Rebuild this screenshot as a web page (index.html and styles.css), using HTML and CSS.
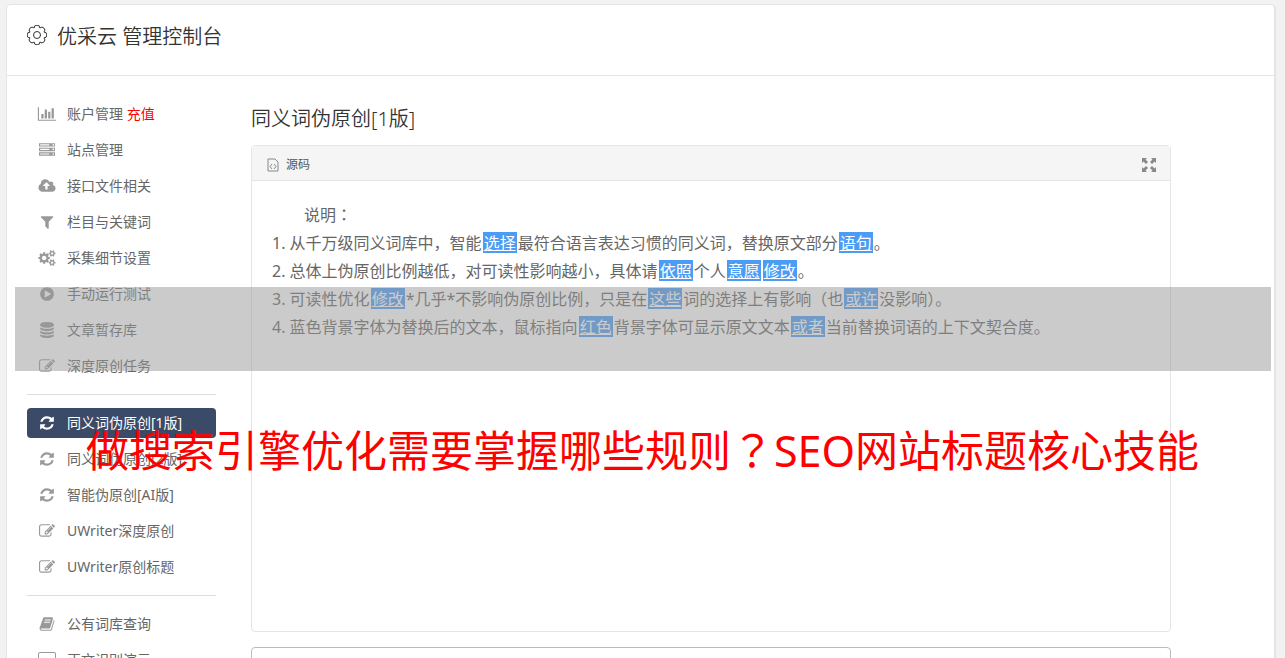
FILE: index.html
```html
<!DOCTYPE html>
<html lang="zh-CN">
<head>
  <meta charset="UTF-8" />
  <title>优采云 管理控制台</title>
  <link rel="stylesheet" href="styles.css">
</head>
<body>
  <!-- Icons -->
  <svg class="sprite" aria-hidden="true">
    <symbol id="i-chart" viewBox="0 0 2048 1792"><path d="M640 896v512h-256v-512h256zm384-512v1024h-256v-1024h256zm1024 1152v128h-2048v-1536h128v1408h1920zm-640-896v768h-256v-768h256zm384-384v1152h-256v-1152h256z"/></symbol>
    <symbol id="i-server" viewBox="0 0 1792 1792"><path d="M128 1408h1024v-128h-1024v128zm0-512h1024v-128h-1024v128zm1568 448q0-40-28-68t-68-28-68 28-28 68 28 68 68 28 68-28 28-68zm-1568-960h1024v-128h-1024v128zm1568 448q0-40-28-68t-68-28-68 28-28 68 28 68 68 28 68-28 28-68zm0-512q0-40-28-68t-68-28-68 28-28 68 28 68 68 28 68-28 28-68zm96 832v384h-1792v-384h1792zm0-512v384h-1792v-384h1792zm0-512v384h-1792v-384h1792z"/></symbol>
    <symbol id="i-cloud" viewBox="0 0 1920 1792"><path d="M1280 864q0-14-9-23l-352-352q-9-9-23-9t-23 9l-351 351q-10 12-10 24 0 14 9 23t23 9h224v352q0 13 9.500 22.500t22.500 9.500h192q13 0 22.500-9.500t9.500-22.500v-352h224q13 0 22.500-9.500t9.500-22.500zm640 288q0 159-112.500 271.500t-271.500 112.500h-1088q-185 0-316.500-131.500t-131.500-316.500q0-130 70-240t188-165q-2-30-2-43 0-212 150-362t362-150q156 0 285.500 87t188.500 231q71-62 166-62 106 0 181 75t75 181q0 76-41 138 130 31 213.500 135.500t83.500 238.500z"/></symbol>
    <symbol id="i-filter" viewBox="0 0 1792 1792"><path d="M1595 295q17 41-14 70l-493 493v742q0 42-39 59-13 5-25 5-27 0-45-19l-256-256q-19-19-19-45v-486l-493-493q-31-29-14-70 17-39 59-39h1280q42 0 59 39z"/></symbol>
    <symbol id="i-cogs" viewBox="0 0 1920 1792"><path d="M896 896q0-106-75-181t-181-75-181 75-75 181 75 181 181 75 181-75 75-181zm768 512q0-52-38-90t-90-38-90 38-38 90q0 53 37.500 90.500t90.500 37.500 90.500-37.500 37.500-90.500zm0-1024q0-52-38-90t-90-38-90 38-38 90q0 53 37.500 90.500t90.500 37.500 90.500-37.500 37.500-90.500zm-384 421v185q0 10-7 19.500t-16 10.500l-155 24q-11 35-32 76 34 48 90 115 7 11 7 20 0 12-7 19-23 30-82.500 89.500t-78.500 59.500q-11 0-21-7l-115-90q-37 19-77 31-11 108-23 155-7 24-30 24h-186q-11 0-20-7.500t-10-17.500l-23-153q-34-10-75-31l-118 89q-7 7-20 7-11 0-21-8-144-133-144-160 0-9 7-19 10-14 41-53t47-61q-23-44-35-82l-152-24q-10-1-17-9.500t-7-19.500v-185q0-10 7-19.500t16-10.500l155-24q11-35 32-76-34-48-90-115-7-11-7-20 0-12 7-20 22-30 82-89t79-59q11 0 21 7l115 90q34-18 77-32 11-108 23-154 7-24 30-24h186q11 0 20 7.500t10 17.500l23 153q34 10 75 31l118-89q8-7 20-7 11 0 21 8 144 133 144 160 0 8-7 19-12 16-42 54t-45 60q23 48 34 82l152 23q10 2 17 10.500t7 19.500zm640 533v140q0 16-149 31-12 27-30 52 51 113 51 138 0 4-4 7-122 71-124 71-8 0-46-47t-52-68q-20 2-30 2t-30-2q-14 21-52 68t-46 47q-2 0-124-71-4-3-4-7 0-25 51-138-18-25-30-52-149-15-149-31v-140q0-16 149-31 13-29 30-52-51-113-51-138 0-4 4-7 4-2 35-20t59-34 30-16q8 0 46 46.500t52 67.500q20-2 30-2t30 2q51-71 92-112l6-2q4 0 124 70 4 3 4 7 0 25-51 138 17 23 30 52 149 15 149 31zm0-1024v140q0 16-149 31-12 27-30 52 51 113 51 138 0 4-4 7-122 71-124 71-8 0-46-47t-52-68q-20 2-30 2t-30-2q-14 21-52 68t-46 47q-2 0-124-71-4-3-4-7 0-25 51-138-18-25-30-52-149-15-149-31v-140q0-16 149-31 13-29 30-52-51-113-51-138 0-4 4-7 4-2 35-20t59-34 30-16q8 0 46 46.500t52 67.500q20-2 30-2t30 2q51-71 92-112l6-2q4 0 124 70 4 3 4 7 0 25-51 138 17 23 30 52 149 15 149 31z"/></symbol>
    <symbol id="i-play" viewBox="0 0 1792 1792"><path d="M896 128q209 0 385.500 103t279.500 279.500 103 385.500-103 385.500-279.500 279.500-385.500 103-385.500-103-279.500-279.500-103-385.500 103-385.500 279.500-279.500 385.500-103zm384 823q32-18 32-55t-32-55l-544-320q-31-19-64-1-32 19-32 56v640q0 37 32 56 16 8 32 8 17 0 32-9z"/></symbol>
    <symbol id="i-database" viewBox="0 0 1792 1792"><path d="M896 768q237 0 443-43t325-127v170q0 69-103 128t-280 93.500-385 34.500-385-34.500-280-93.500-103-128v-170q119 84 325 127t443 43zm0 768q237 0 443-43t325-127v170q0 69-103 128t-280 93.500-385 34.500-385-34.500-280-93.500-103-128v-170q119 84 325 127t443 43zm0-384q237 0 443-43t325-127v170q0 69-103 128t-280 93.500-385 34.500-385-34.500-280-93.500-103-128v-170q119 84 325 127t443 43zm0-1152q208 0 385 34.500t280 93.500 103 128v128q0 69-103 128t-280 93.500-385 34.500-385-34.500-280-93.500-103-128v-128q0-69 103-128t280-93.500 385-34.500z"/></symbol>
    <symbol id="i-edit" viewBox="0 0 1792 1792"><path d="M888 1184l116-116-152-152-116 116v56h96v96h56zm440-720q-16-16-33 1l-350 350q-17 17-1 33t33-1l350-350q17-17 1-33zm80 594v190q0 119-84.500 203.500t-203.500 84.500h-832q-119 0-203.500-84.500t-84.500-203.500v-832q0-119 84.500-203.500t203.500-84.500h832q63 0 117 25 15 7 18 23 3 17-9 29l-49 49q-14 14-32 8-23-6-45-6h-832q-66 0-113 47t-47 113v832q0 66 47 113t113 47h832q66 0 113-47t47-113v-126q0-13 9-22l64-64q15-15 35-7t20 29zm-96-738l288 288-672 672h-288v-288zm444 132l-92 92-288-288 92-92q28-28 68-28t68 28l152 152q28 28 28 68t-28 68z"/></symbol>
    <symbol id="i-refresh" viewBox="0 0 1792 1792"><path d="M1639 1056q0 5-1 7-64 268-268 434.500t-478 166.500q-146 0-282.500-55t-243.500-157l-129 129q-19 19-45 19t-45-19-19-45v-448q0-26 19-45t45-19h448q26 0 45 19t19 45-19 45l-137 137q71 66 161 102t187 36q134 0 250-65t186-179q11-17 53-117 8-23 30-23h192q13 0 22.500 9.500t9.500 22.500zm25-800v448q0 26-19 45t-45 19h-448q-26 0-45-19t-19-45 19-45l138-138q-148-137-349-137-134 0-250 65t-186 179q-11 17-53 117-8 23-30 23h-199q-13 0-22.500-9.500t-9.500-22.500v-7q65-268 270-434.500t480-166.500q146 0 284 55.500t245 156.500l130-129q19-19 45-19t45 19 19 45z"/></symbol>
    <symbol id="i-book" viewBox="0 0 1792 1792"><path d="M1703 478q40 57 18 129l-275 906q-19 64-76.500 107.500t-122.500 43.500h-923q-77 0-148.500-53.500t-99.500-131.500q-24-67-2-127 0-4 3-27t4-37q1-8-3-21.500t-3-19.500q2-11 8-21t16.500-23.500 16.500-23.500q23-38 45-91.500t30-91.500q3-10 .5-30t-.5-28q3-11 17-28t17-23q21-36 42-92t25-90q1-9-2.500-32t.5-28q4-13 22-30.500t22-22.500q19-26 42.500-84.500t27.500-96.500q1-8-3-25.500t-2-26.500q2-8 9-18t18-23 17-21q8-12 16.500-30.500t15-35 16-36 19.500-32 26.500-23.500 36-11.500 47.500 5.500l-1 3q38-9 51-9h761q74 0 114 56t18 130l-274 906q-36 119-71.500 153.500t-128.500 34.500h-869q-27 0-38 15-11 16-1 43 24 70 144 70h923q29 0 56-15.500t35-41.500l300-987q7-22 5-57 38 15 59 43zm-1064 2q-4 13 2 22.500t20 9.500h608q13 0 25.500-9.500t16.500-22.500l21-64q4-13-2-22.500t-20-9.500h-608q-13 0-25.500 9.500t-16.500 22.500zm-83 256q-4 13 2 22.500t20 9.500h608q13 0 25.500-9.500t16.500-22.500l21-64q4-13-2-22.500t-20-9.500h-608q-13 0-25.500 9.500t-16.500 22.500z"/></symbol>
    <symbol id="i-laptop" viewBox="0 0 18 16"><path d="M2 0h14q2 0 2 2v9q0 2-2 2h-5v2h2v1h-8v-1h2v-2h-5q-2 0-2-2v-9q0-2 2-2zm0 1q-1 0-1 1v8h16v-8q0-1-1-1z"/></symbol>
  </svg>

  <div class="page">
    <header>
      <svg class="gear" viewBox="0 0 20 20"><path d="M17 12.900A2.900 2.900 0 0 1 12.900 17A2.900 2.900 0 0 1 7.100 17A2.900 2.900 0 0 1 3 12.900A2.900 2.900 0 0 1 3 7.100A2.900 2.900 0 0 1 7.100 3A2.900 2.900 0 0 1 12.900 3A2.900 2.900 0 0 1 17 7.100A2.900 2.900 0 0 1 17 12.900z"/><circle cx="10" cy="10" r="3.500"/></svg>
      <h1>优采云 管理控制台</h1>
    </header>

    <div class="main">
      <!-- Menu -->
      <nav>
        <a href="#"><svg><use href="#i-chart"/></svg>账户管理 <span class="pay">充值</span></a>
        <a href="#"><svg><use href="#i-server"/></svg>站点管理</a>
        <a href="#"><svg><use href="#i-cloud"/></svg>接口文件相关</a>
        <a href="#"><svg><use href="#i-filter"/></svg>栏目与关键词</a>
        <a href="#"><svg><use href="#i-cogs"/></svg>采集细节设置</a>
        <a href="#"><svg><use href="#i-play"/></svg>手动运行测试</a>
        <a href="#"><svg><use href="#i-database"/></svg>文章暂存库</a>
        <a href="#"><svg><use href="#i-edit"/></svg>深度原创任务</a>
        <hr>
        <a href="#" class="active"><svg><use href="#i-refresh"/></svg>同义词伪原创[1版]</a>
        <a href="#"><svg><use href="#i-refresh"/></svg>同义词伪原创[2版]</a>
        <a href="#"><svg><use href="#i-refresh"/></svg>智能伪原创[AI版]</a>
        <a href="#"><svg><use href="#i-edit"/></svg>UWriter深度原创</a>
        <a href="#"><svg><use href="#i-edit"/></svg>UWriter原创标题</a>
        <hr>
        <a href="#"><svg><use href="#i-book"/></svg>公有词库查询</a>
        <a href="#"><svg><use href="#i-laptop"/></svg>正文识别演示</a>
      </nav>

      <!-- Editor -->
      <section class="content">
        <h2>同义词伪原创[1版]</h2>
        <div class="editor">
          <div class="toolbar">
            <button type="button" class="source">
              <svg viewBox="0 0 12 14"><path d="M1 1h7l3 3v9h-10z M5 6l-2 2.500 2 2.500 M7 6l2 2.500-2 2.500"/></svg>源码
            </button>
            <button type="button" class="expand" aria-label="全屏">
              <svg viewBox="0 0 14 14"><path d="M0 0h5l-1.500 1.500 2.500 2.500-2 2-2.500-2.500L0 5zM14 0v5l-1.500-1.500L10 6 8 4l2.500-2.500L9 0zM0 14V9l1.500 1.500L4 8l2 2-2.500 2.500L5 14zM14 14H9l1.500-1.500L8 10l2-2 2.500 2.500L14 9z"/></svg>
            </button>
          </div>
          <div class="text">
            <p>说明<span class="mid" lang="zh-TW">：</span></p>
            <ol>
              <li>从千万级同义词库中，智能<mark>选择</mark>最符合语言表达习惯的同义词，替换原文部分<mark>语句</mark>。</li>
              <li>总体上伪原创比例越低，对可读性影响越小，具体请<mark>依照</mark>个人<mark>意愿</mark><mark>修改</mark>。</li>
              <li>可读性优化<mark>修改</mark>*几乎*不影响伪原创比例，只是在<mark>这些</mark>词的选择上有影响（也<mark>或许</mark>没影响<span class="mid" lang="zh-TW">）</span><span class="mid">。</span></li>
              <li>蓝色背景字体为替换后的文本，鼠标指向<mark>红色</mark>背景字体可显示原文文本<mark>或者</mark>当前替换词语的上下文契合度。</li>
            </ol>
          </div>
        </div>
        <textarea aria-label="原文"></textarea>
      </section>
    </div>

    <div class="band"></div>
    <div class="caption">做搜索引擎优化需要掌握哪些规则<span class="mid" lang="zh-TW">？</span>SEO网站标题核心技能</div>
  </div>
</body>
</html>
```
FILE: styles.css
```css
* { box-sizing: border-box; }
body {
  margin: 0;
  background: #f2f2f2;
  color: #666;
  font-family: "Noto Sans", "Noto Sans CJK SC", sans-serif;
  font-size: 14px;
}
.sprite {
  display: none;
}
.page {
  position: relative;
  height: 100vh;
  padding: 4px 9px 0 6px;
  overflow: hidden;
}
header {
  display: flex;
  align-items: center;
  height: 72px;
  padding: 0 20px 6px;
  background: white;
  border: 1px solid #e5e5e5;
  border-right-width: 2px;
  border-radius: 5px 5px 0 0;
}
.gear {
  width: 20px;
  height: 20px;
  margin: 0 10px 4px 0;
  fill: none;
  stroke: #333;
}
h1, h2 {
  margin: 0;
  color: #333;
  font-size: 20px;
  font-weight: 350;
  line-height: 28px;
}
.main {
  display: flex;
  gap: 35px;
  min-height: 100%;
  padding: 23px 20px;
  background: white;
  border: solid #e5e5e5;
  border-width: 0 2px 0 1px;
}
nav {
  display: flex;
  flex-direction: column;
  flex: none;
  gap: 6px;
  width: 189px;
}
nav a {
  display: flex;
  align-items: center;
  height: 30px;
  padding: 0 0 2px 10px;
  border-radius: 4px;
  color: #666;
  text-decoration: none;
  white-space: pre;
}
nav svg {
  width: 20px;
  height: 16px;
  margin: 2px 10px 0 0;
  fill: #999;
}
nav .active {
  background: #3b4a66;
  color: white;
}
.active svg {
  fill: white;
}
.pay {
  color: red;
}
nav hr {
  width: 100%;
  margin: 7px 0;
  border: 0;
  border-top: 1px solid #ddd;
}
.content {
  flex: 1;
  max-width: 920px;
  padding-top: 6px;
}
h2 {
  margin-bottom: 12px;
}
.editor {
  border: 1px solid #e5e5e5;
  border-radius: 4px;
}
.toolbar {
  display: flex;
  align-items: center;
  justify-content: space-between;
  height: 35px;
  padding: 2px 14px 0;
  background: #f5f5f5;
  border-bottom: 1px solid #e5e5e5;
}
.toolbar button {
  display: flex;
  align-items: center;
  padding: 0;
  border: 0;
  background: none;
  color: #555;
  font: inherit;
  font-size: 12px;
  cursor: pointer;
}
.source svg {
  width: 14px;
  height: 14px;
  margin: 2px 6px 0 0;
  fill: none;
  stroke: #888;
}
.expand svg {
  width: 14px;
  height: 14px;
  margin-top: 2px;
  fill: #888;
}
.text {
  min-height: 450px;
  padding: 20px;
  font-size: 16px;
  line-height: 28px;
}
.text p {
  margin: 0;
  text-indent: 2em;
}
.text ol {
  margin: 0;
  padding: 0;
  list-style-position: inside;
}
mark {
  display: inline-block;
  margin: 0 1px;
  padding: 1px 1px 0;
  background: #4a9cf5;
  color: white;
  line-height: 20px;
  text-decoration: underline;
}
/* punctuation centred in its cell */
.mid {
  font-family: "Noto Sans CJK TC", sans-serif;
  line-height: 1;
}
textarea {
  display: block;
  width: 100%;
  height: 120px;
  margin-top: 15px;
  border: 1px solid #bbb;
  border-radius: 4px;
  resize: none;
}
.band {
  position: absolute;
  top: 287px;
  left: 15px;
  right: 14px;
  height: 84px;
  background: rgba(151, 151, 151, 0.5);
}
.caption {
  position: absolute;
  top: 421px;
  left: 0;
  right: 0;
  color: red;
  font-size: 43px;
  line-height: 60px;
  text-align: center;
  white-space: nowrap;
}
```
